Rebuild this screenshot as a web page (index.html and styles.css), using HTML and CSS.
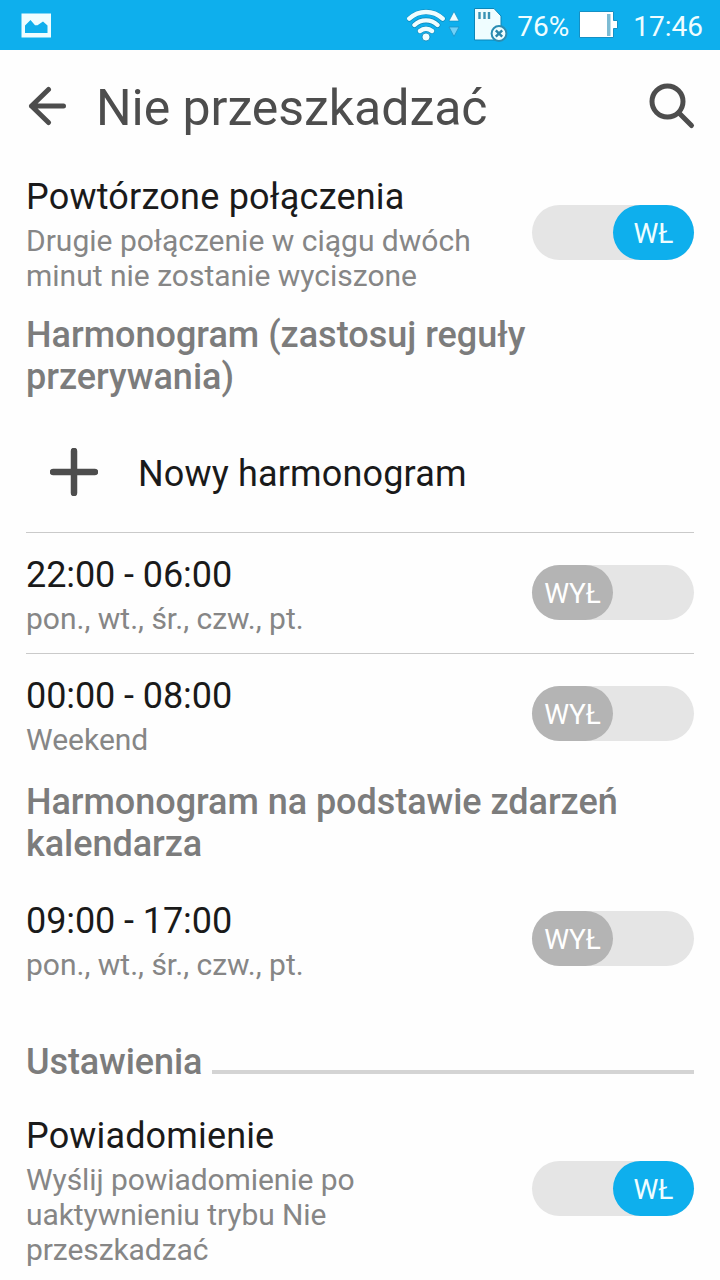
FILE: index.html
```
<!DOCTYPE html>
<html lang="pl">

<head>
    <meta charset="UTF-8">
    <meta name="viewport" content="width=device-width, initial-scale=1.0">
    <title>Nie przeszkadzać</title>
    <link rel="stylesheet" href="styles.css">
</head>

<body>
    <!-- Status bar -->
    <div class="statusbar">
        <svg class="icon-picture" width="30" height="25" viewBox="0 0 30 25">
            <path fill="#effdff" fill-rule="evenodd" d="M.5.5h29.500v24H.5zM4 20h22.500v-7.500L22 8.500l-5.500 3.700h-2.500L9.500 7 4 12.500z" />
        </svg>
        <svg class="icon-wifi" width="54" height="34" viewBox="0 0 54 34">
            <g fill="none" stroke="#0b86b8" stroke-width="5.600" stroke-linecap="round">
                <path d="M2.300 10.700a24 24 0 0 1 33.400 0M7.500 17a16.500 16.500 0 0 1 23 0M13 23a9 9 0 0 1 12 0" />
            </g>
            <g fill="none" stroke="#effdff" stroke-width="4.400" stroke-linecap="round">
                <path d="M2.300 10.700a24 24 0 0 1 33.400 0M7.500 17a16.500 16.500 0 0 1 23 0M13 23a9 9 0 0 1 12 0" />
            </g>
            <circle cx="19" cy="29" r="4" fill="#effdff" stroke="#0b86b8" stroke-width=".8" />
            <path d="M42 13l5-9.500 5 9.500z" fill="#effdff" stroke="#0b86b8" stroke-width=".6" />
            <path d="M42 19h10l-5 9.500z" fill="#6fd0f7" stroke="#1b93c8" stroke-width=".8" />
        </svg>
        <svg class="icon-sim" width="34" height="34" viewBox="0 0 34 34">
            <path d="M.5.5h19.500l7 7.500v24H.5z" fill="#effdff" stroke="#0b86b8" stroke-width="1" />
            <path d="M5.500 4v7M10.500 4v7M15 4v7" stroke="#3a93b5" stroke-width="2.400" />
            <circle cx="25" cy="25.500" r="7.400" fill="#effdff" stroke="#2b8db3" stroke-width="2" />
            <path d="M21.800 22.300l6.400 6.400M28.200 22.300l-6.400 6.400" stroke="#2b86aa" stroke-width="2.400" />
        </svg>
        <span class="percent">76%</span>
        <svg class="icon-battery" width="40" height="28" viewBox="0 0 40 28">
            <path d="M.5.5h34v9h4v8h-4v9H.5z" fill="#fff" stroke="#1590c4" stroke-width="1" />
            <path d="M28 3h3.500v22H28z" fill="#7dbbd3" />
        </svg>
        <span class="clock">17:46</span>
    </div>

    <!-- Title bar -->
    <div class="header">
        <svg class="icon-back" width="40" height="40" viewBox="0 0 40 40">
            <path d="M21.500 3.500L4.500 20l17 16.500M4.500 20h32" />
        </svg>
        <h1>Nie przeszkadzać</h1>
        <svg class="icon-search" width="48" height="48" viewBox="0 0 48 48">
            <circle cx="19.500" cy="19.500" r="15.500" />
            <path d="M31 31l12.500 12.500" />
        </svg>
    </div>

    <!-- Settings -->
    <div class="content">
        <div class="row">
            <div class="text">
                <p class="name wide">Powtórzone połączenia</p>
                <p class="desc">Drugie połączenie w ciągu dwóch minut nie zostanie wyciszone</p>
            </div>
            <div class="toggle on"><span>WŁ</span></div>
        </div>

        <h2>Harmonogram (zastosuj reguły przerywania)</h2>
        <div class="new-schedule">
            <svg class="icon-plus" width="48" height="48" viewBox="0 0 48 48">
                <path d="M24 3v42M3 24h42" />
            </svg>
            <p class="name">Nowy harmonogram</p>
        </div>
        <div class="row line">
            <div class="text">
                <p class="name time">22:00 - 06:00</p>
                <p class="desc">pon., wt., śr., czw., pt.</p>
            </div>
            <div class="toggle"><span>WYŁ</span></div>
        </div>
        <div class="row line">
            <div class="text">
                <p class="name time">00:00 - 08:00</p>
                <p class="desc">Weekend</p>
            </div>
            <div class="toggle"><span>WYŁ</span></div>
        </div>

        <h2 class="calendar">Harmonogram na podstawie zdarzeń kalendarza</h2>
        <div class="row">
            <div class="text">
                <p class="name time">09:00 - 17:00</p>
                <p class="desc">pon., wt., śr., czw., pt.</p>
            </div>
            <div class="toggle"><span>WYŁ</span></div>
        </div>

        <h2 class="settings">Ustawienia</h2>
        <div class="row">
            <div class="text">
                <p class="name">Powiadomienie</p>
                <p class="desc narrow">Wyślij powiadomienie po uaktywnieniu trybu Nie przeszkadzać</p>
            </div>
            <div class="toggle on"><span>WŁ</span></div>
        </div>
    </div>
</body>

</html>
```
FILE: styles.css
```
* {
    box-sizing: border-box;
}

body {
    margin: 0;
    height: 1280px;
    overflow: hidden;
    background-color: #fefefe;
    font-family: Roboto, sans-serif;
}

h1,
h2,
p {
    margin: 0;
    font-weight: 400;
}

svg {
    display: block;
    flex: none;
}

.statusbar {
    display: flex;
    align-items: center;
    height: 50px;
    padding: 0 17px 0 21px;
    background-color: #0eafed;
    color: #effdff;
    font-size: 28px;
    line-height: 34px;
}

.icon-wifi {
    margin-left: auto;
}

.icon-sim {
    margin-left: 13px;
}

.percent {
    margin-left: 9px;
    padding-top: 3px;
}

.icon-battery {
    margin-left: 10px;
}

.clock {
    margin-left: 14px;
    padding-top: 3px;
}

.header {
    display: flex;
    height: 105px;
    padding: 28px 24px 0 27px;
}

.header h1 {
    flex: 1;
    margin: 1px 0 0 29px;
    color: #4d4d4d;
    font-size: 50px;
    line-height: 59px;
    letter-spacing: -0.05px;
}

.icon-back,
.icon-search,
.icon-plus {
    fill: none;
    stroke: #4d4d4d;
    stroke-width: 5;
    stroke-linecap: round;
    stroke-linejoin: round;
}

.icon-back {
    margin-top: 8px;
}

.icon-search {
    margin-top: 4px;
}

.icon-plus {
    stroke-width: 6.5;
}

.content {
    padding: 0 26px;
}

.row {
    display: flex;
    align-items: center;
    justify-content: space-between;
}

.line {
    border-top: 1px solid #cacaca;
}

.text {
    width: 470px;
    padding: 21px 0 17px;
}

.name {
    color: #1a1a1a;
    font-size: 36px;
    line-height: 42px;
    letter-spacing: 0.15px;
}

.name.wide {
    letter-spacing: 0.22px;
}

.name.time {
    letter-spacing: -0.08px;
}

.desc {
    margin-top: 5px;
    color: #868686;
    font-size: 30px;
    line-height: 35px;
}

.desc.narrow {
    width: 400px;
    letter-spacing: -0.08px;
}

h2 {
    margin-top: 4px;
    color: #7c7c7c;
    font-size: 36px;
    font-weight: 500;
    line-height: 42px;
}

.calendar {
    margin: 7px 0 14px;
    letter-spacing: -0.04px;
}

.settings {
    display: flex;
    margin: 42px 0 11px;
    letter-spacing: -0.1px;
}

.settings::after {
    content: "";
    flex: 1;
    height: 4px;
    margin: 29px 0 0 10px;
    background-color: #d4d4d4;
}

.new-schedule {
    display: flex;
    align-items: center;
    height: 134px;
    padding: 14px 0 0 24px;
}

.new-schedule .name {
    margin-left: 40px;
    padding-top: 3px;
}

.toggle {
    display: flex;
    width: 162px;
    height: 55px;
    margin-bottom: 1px;
    border-radius: 28px;
    background-color: #e5e5e5;
}

.toggle span {
    width: 81px;
    border-radius: 28px;
    background-color: #b4b4b4;
    color: #fff;
    font-size: 28px;
    line-height: 57px;
    text-align: center;
}

.toggle.on {
    justify-content: flex-end;
}

.toggle.on span {
    background-color: #0eafed;
    color: #effdff;
}
```
